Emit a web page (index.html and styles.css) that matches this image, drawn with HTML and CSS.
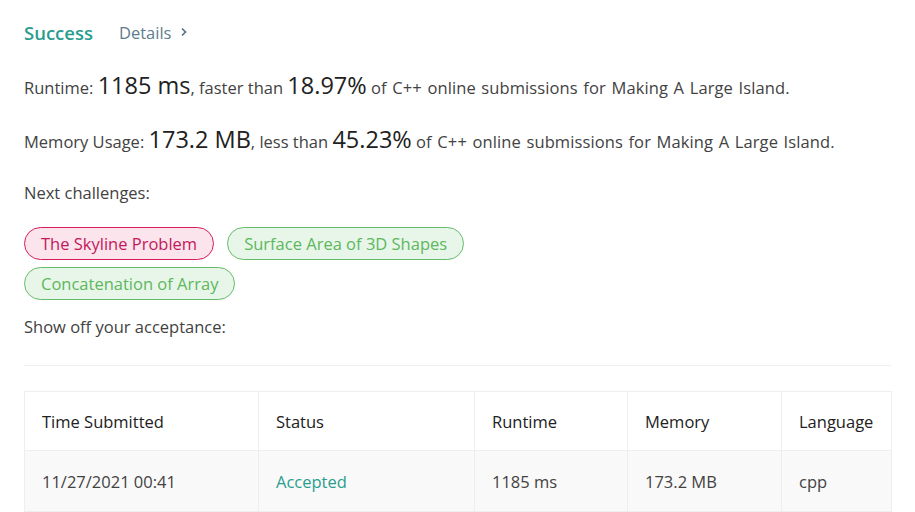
FILE: index.html
```html
<!DOCTYPE html>
<html>
<head>
<meta charset="utf-8">
<link rel="stylesheet" href="styles.css">
</head>
<body>
<div class="page">
  <div class="result-head">
    <span class="status">Success</span>
    <span class="details">Details <svg class="chev" width="8" height="10" viewBox="0 0 8 10"><path d="M2 1.5 L5.5 5 L2 8.5" fill="none" stroke="#546e7a" stroke-width="1.6"/></svg></span>
  </div>
  <p class="stat first">Runtime: <span class="big">1185 ms</span>, faster than <span class="big">18.97%</span> <span class="tail">of C++ online submissions for Making A Large Island.</span></p>
  <p class="stat">Memory Usage: <span class="big">173.2 MB</span>, less than <span class="big">45.23%</span> <span class="tail">of C++ online submissions for Making A Large Island.</span></p>
  <p class="label next">Next challenges:</p>
  <div class="tags">
    <span class="tag hard">The Skyline Problem</span>
    <span class="tag easy">Surface Area of 3D Shapes</span>
    <span class="tag easy">Concatenation of Array</span>
  </div>
  <p class="label show">Show off your acceptance:</p>
  <hr class="sep">
  <table class="subs">
    <thead>
      <tr><th class="c1">Time Submitted</th><th class="c2">Status</th><th class="c3">Runtime</th><th class="c4">Memory</th><th class="c5">Language</th></tr>
    </thead>
    <tbody>
      <tr><td>11/27/2021 00:41</td><td class="ok">Accepted</td><td>1185 ms</td><td>173.2 MB</td><td>cpp</td></tr>
    </tbody>
  </table>
</div>
</body>
</html>
```
FILE: styles.css
```css
html, body {
  margin: 0;
  padding: 0;
  background: #fff;
}
body {
  font-family: "Open Sans", "Noto Sans", sans-serif;
  color: #424242;
  font-size: 16.5px;
}
.page {
  padding: 19px 24px 0 24px;
}
.result-head {
  display: flex;
  align-items: center;
  gap: 26px;
  height: 26px;
}
.status {
  color: #2a9d8f;
  font-weight: 600;
  font-size: 18.5px;
}
.details {
  color: #607d8b;
  font-size: 16.5px;
  display: inline-flex;
  align-items: center;
  gap: 9px;
}
.stat {
  margin: 0;
  height: 54px;
  line-height: 54px;
  white-space: nowrap;
}
.stat.first {
  margin-top: 16px;
}
.big {
  font-size: 23.5px;
  color: #212121;
  line-height: 1;
}
.tail {
  word-spacing: 1.2px;
  letter-spacing: 0.1px;
}
.label {
  margin: 0;
  line-height: 30px;
  height: 30px;
}
.label.next {
  margin-top: 9px;
}
.tags {
  display: flex;
  flex-wrap: wrap;
  gap: 7px 13px;
  margin-top: 19px;
  width: 500px;
}
.tag {
  display: inline-block;
  box-sizing: border-box;
  border-radius: 17px;
  padding: 0 16px;
  height: 33px;
  line-height: 31px;
  border: 1px solid;
}
.hard {
  background: #fce4ec;
  border-color: #d81b60;
  color: #c2185b;
}
.easy {
  background: #e8f5e9;
  border-color: #66bb6a;
  color: #5cb85c;
}
.label.show {
  margin-top: 12px;
}
.sep {
  border: 0;
  border-top: 1px solid #eeeeee;
  margin: 23px 0 25px 0;
}
.subs {
  width: 867px;
  table-layout: fixed;
  border-collapse: collapse;
  border: 1px solid #eeeeee;
  color: #212121;
}
.subs th, .subs td {
  text-align: left;
  font-weight: normal;
  border: 1px solid #eeeeee;
  padding: 0 17px;
  height: 59px;
  box-sizing: border-box;
}
.subs tbody tr {
  background: #f9f9f9;
}
.subs td {
  color: #424242;
  height: 61px;
}
.subs td.ok {
  color: #2a9d8f;
}
.c1 { width: 234px; }
.c2 { width: 216px; }
.c3 { width: 153px; }
.c4 { width: 154px; }
.c5 { width: 110px; }
```
